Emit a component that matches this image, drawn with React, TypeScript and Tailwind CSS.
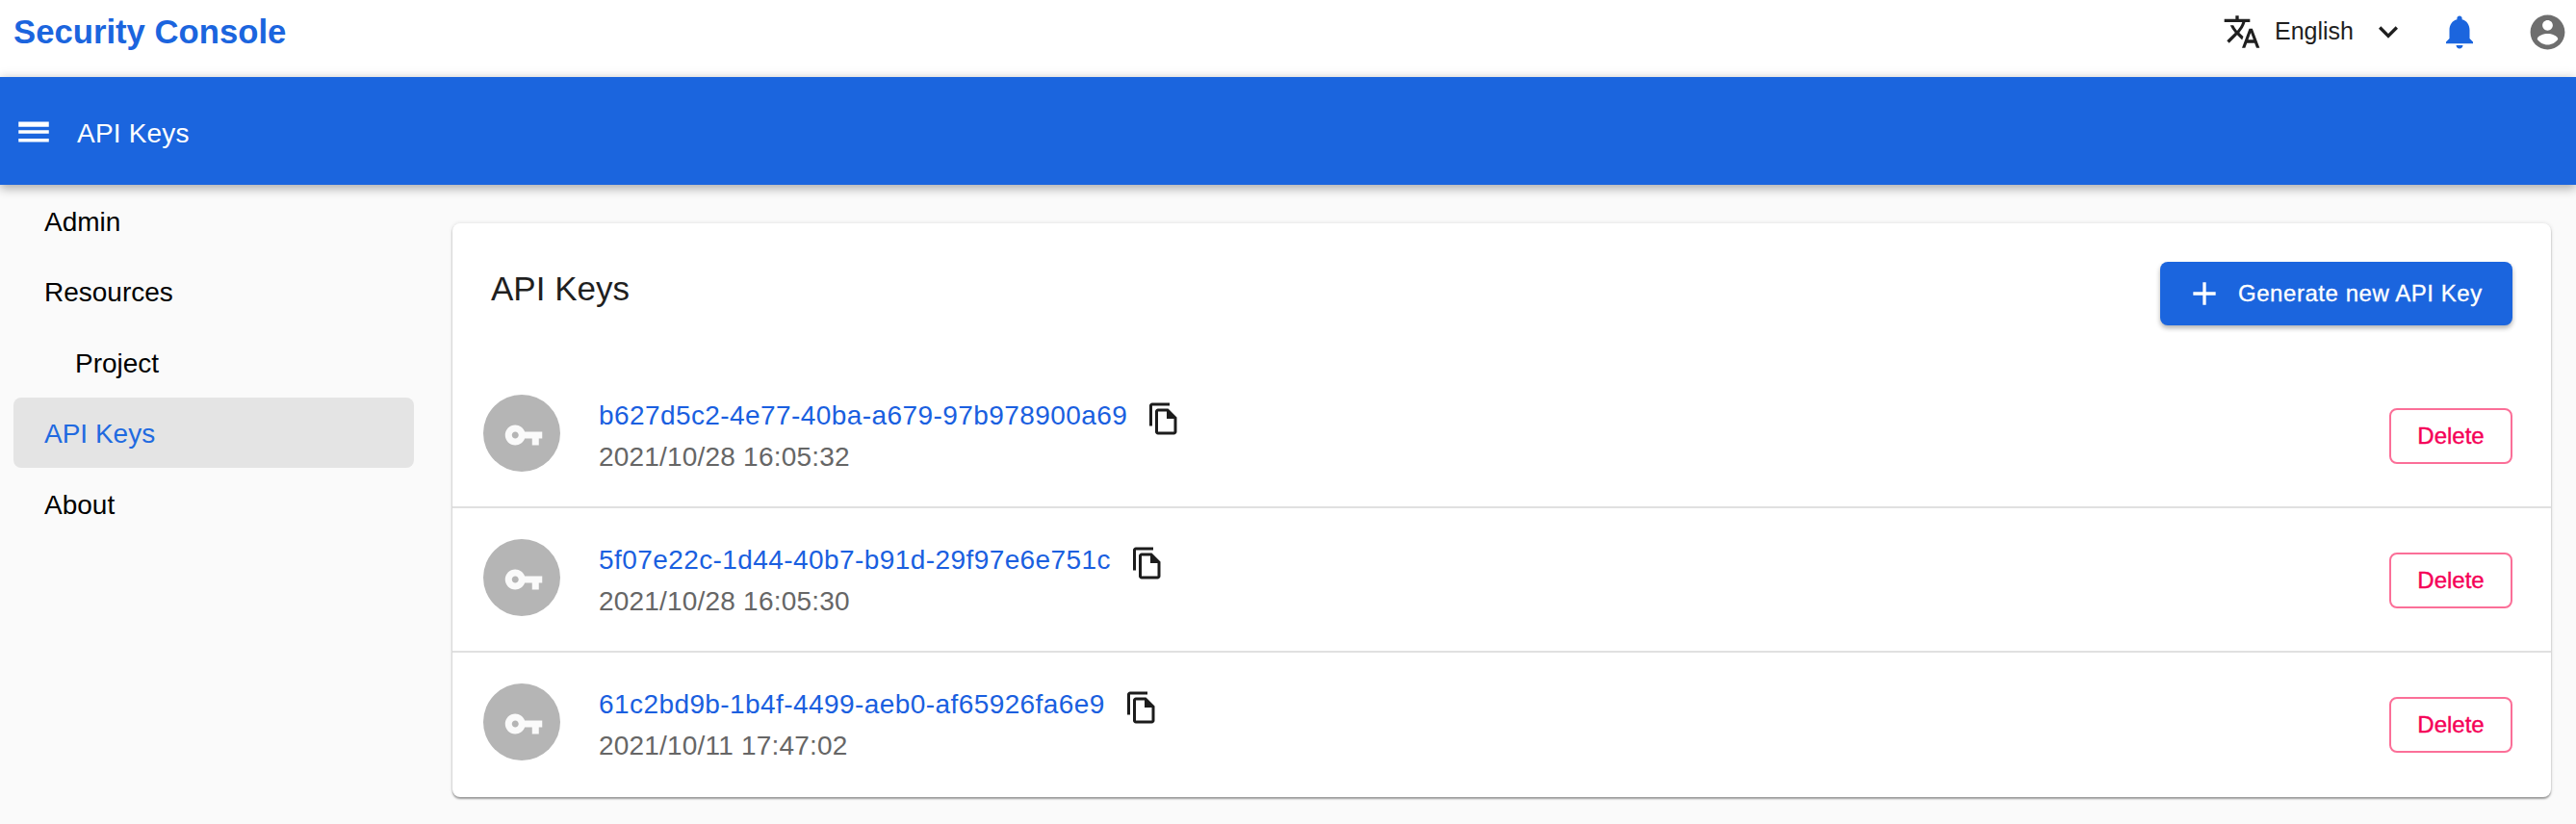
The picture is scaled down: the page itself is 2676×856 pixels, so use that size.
const FONT = "[font-family:'Liberation_Sans',Arial,sans-serif]";

const keys = [
  { id: "b627d5c2-4e77-40ba-a679-97b978900a69", date: "2021/10/28 16:05:32" },
  { id: "5f07e22c-1d44-40b7-b91d-29f97e6e751c", date: "2021/10/28 16:05:30" },
  { id: "61c2bd9b-1b4f-4499-aeb0-af65926fa6e9", date: "2021/10/11 17:47:02" },
];

function Icon({ d, className }: { d: string; className: string }) {
  return (
    <svg viewBox="0 0 24 24" fill="currentColor" className={className}>
      <path d={d} />
    </svg>
  );
}

const icons = {
  translate:
    "M12.87 15.07l-2.54-2.51.03-.03c1.74-1.94 2.98-4.17 3.71-6.53H17V4h-7V2H8v2H1v1.99h11.17C11.5 7.92 10.44 9.75 9 11.35 8.07 10.32 7.3 9.19 6.69 8h-2c.73 1.63 1.73 3.17 2.98 4.56l-5.09 5.02L4 19l5-5 3.11 3.11.76-2.04zM18.5 10h-2L12 22h2l1.12-3h4.75L21 22h2l-4.5-12zm-2.62 7l1.62-4.33L19.12 17h-3.24z",
  chevron: "M16.59 8.59L12 13.17 7.41 8.59 6 10l6 6 6-6z",
  bell: "M12 22c1.1 0 2-.9 2-2h-4c0 1.1.89 2 2 2zm6-6v-5c0-3.07-1.64-5.64-4.5-6.32V4c0-.83-.67-1.5-1.5-1.5s-1.5.67-1.5 1.5v.68C7.63 5.36 6 7.92 6 11v5l-2 2v1h16v-1l-2-2z",
  account:
    "M12 2C6.48 2 2 6.48 2 12s4.48 10 10 10 10-4.48 10-10S17.52 2 12 2zm0 3c1.66 0 3 1.34 3 3s-1.34 3-3 3-3-1.34-3-3 1.34-3 3-3zm0 14.2c-2.5 0-4.71-1.28-6-3.22.03-1.99 4-3.08 6-3.08 1.99 0 5.97 1.09 6 3.08-1.29 1.94-3.5 3.22-6 3.22z",
  menu: "M3 18h18v-2H3v2zm0-5h18v-2H3v2zm0-6v2h18V6H3z",
  plus: "M19 13h-6v6h-2v-6H5v-2h6V5h2v6h6v2z",
  key: "M12.65 10C11.83 7.67 9.61 6 7 6c-3.31 0-6 2.69-6 6s2.69 6 6 6c2.61 0 4.83-1.67 5.65-4H17v4h4v-4h2v-4H12.65zM7 14c-1.1 0-2-.9-2-2s.9-2 2-2 2 .9 2 2-.9 2-2 2z",
  copy: "M16 1H4c-1.1 0-2 .9-2 2v14h2V3h12V1zm-1 4H8c-1.1 0-1.99.9-1.99 2L6 21c0 1.1.89 2 1.99 2H19c1.1 0 2-.9 2-2V11l-6-6zM8 21V7h6v5h5v9H8z",
};

function NavItem({ label, active, indent }: { label: string; active?: boolean; indent?: boolean }) {
  return (
    <div
      className={`flex h-[73.5px] items-center rounded-lg pt-[4px] text-[28px] ${
        indent ? "pl-[64px]" : "pl-8"
      } ${active ? "bg-[#e4e4e4] text-[#1f6ae0]" : "text-black"}`}
    >
      {label}
    </div>
  );
}

function KeyRow({ id, date, last }: { id: string; date: string; last: boolean }) {
  return (
    <div className={`flex h-[150px] items-start pl-8 pr-10 ${last ? "" : "border-b-2 border-[#e0e0e0]"}`}>
      <div className="mt-8 flex h-20 w-20 shrink-0 items-center justify-center rounded-full bg-[#b5b5b5] text-[#fafafa]">
        <Icon d={icons.key} className="ml-1 mt-1 h-[42px] w-[42px]" />
      </div>
      <div className="ml-10 mt-8 flex-1">
        <div className="flex h-11 items-center">
          <span className="text-[28px] tracking-[0.42px] text-[#1a5fe0]">{id}</span>
          <Icon d={icons.copy} className="ml-[20px] mt-[6px] h-9 w-9 text-[#1c1c1c]" />
        </div>
        <div className="h-[42px] text-[28px] leading-[42px] tracking-[0.2px] text-[#666666]">{date}</div>
      </div>
      <button className="mt-[46px] h-[58px] w-[128px] rounded-lg border-2 border-[#fb6f98] text-[24px] text-[#f50057] [-webkit-text-stroke:0.4px_#f50057]">
        Delete
      </button>
    </div>
  );
}

export default function App() {
  return (
    <div className={`flex min-h-[856px] flex-col overflow-hidden bg-[#fafafa] ${FONT}`}>
      <header className="flex h-20 items-center bg-white pb-[14px] pl-[14px] pr-[8px]">
        <div className="text-[34.7px] font-bold text-[#1b65de]">Security Console</div>
        <div className="ml-auto flex items-center">
          <Icon d={icons.translate} className="h-10 w-10 text-[#1f1f1f]" />
          <span className="ml-[14px] w-[98px] text-[25px] text-[#1f1f1f]">English</span>
          <Icon d={icons.chevron} className="h-10 w-10 text-[#1f1f1f]" />
          <Icon d={icons.bell} className="ml-[33px] h-[42px] w-[42px] text-[#1b65de]" />
          <Icon d={icons.account} className="ml-[49px] h-[43px] w-[43px] text-[#6e6e6e]" />
        </div>
      </header>

      <div className="relative z-10 flex h-28 items-center bg-[#1b65de] pl-[14px] text-white shadow-[0_4px_10px_rgba(0,0,0,0.3),0_-3px_10px_rgba(0,0,0,0.06)]">
        <Icon d={icons.menu} className="mt-[2px] h-[42px] w-[42px]" />
        <span className="ml-[24px] mt-[5px] text-[28px] tracking-[0.2px]">API Keys</span>
      </div>

      <div className="flex flex-1">
        <nav className="w-[470px] shrink-0 pl-[14px] pr-10">
          <NavItem label="Admin" />
          <NavItem label="Resources" />
          <NavItem label="Project" indent />
          <NavItem label="API Keys" active />
          <NavItem label="About" />
        </nav>

        <main className="flex-1 pr-[26px] pt-10">
          <section className="rounded-lg bg-white shadow-[0_2px_2px_rgba(0,0,0,0.35),0_0_4px_rgba(0,0,0,0.12)]">
            <div className="flex h-[146px] items-start justify-between pl-10 pr-10 pt-10">
              <h1 className="text-[35px] leading-[56px] text-[#1f1f1f]">API Keys</h1>
              <button className="flex h-[66px] w-[366px] items-center rounded-lg bg-[#1b65de] pl-[26px] text-[24px] tracking-[0.55px] text-white shadow-[0_3px_5px_rgba(0,0,0,0.3)] [-webkit-text-stroke:0.3px_#ffffff]">
                <Icon d={icons.plus} className="h-10 w-10" />
                <span className="ml-[15px]">Generate new API Key</span>
              </button>
            </div>
            {keys.map((k, i) => (
              <KeyRow key={k.id} id={k.id} date={k.date} last={i === keys.length - 1} />
            ))}
          </section>
        </main>
      </div>
    </div>
  );
}
